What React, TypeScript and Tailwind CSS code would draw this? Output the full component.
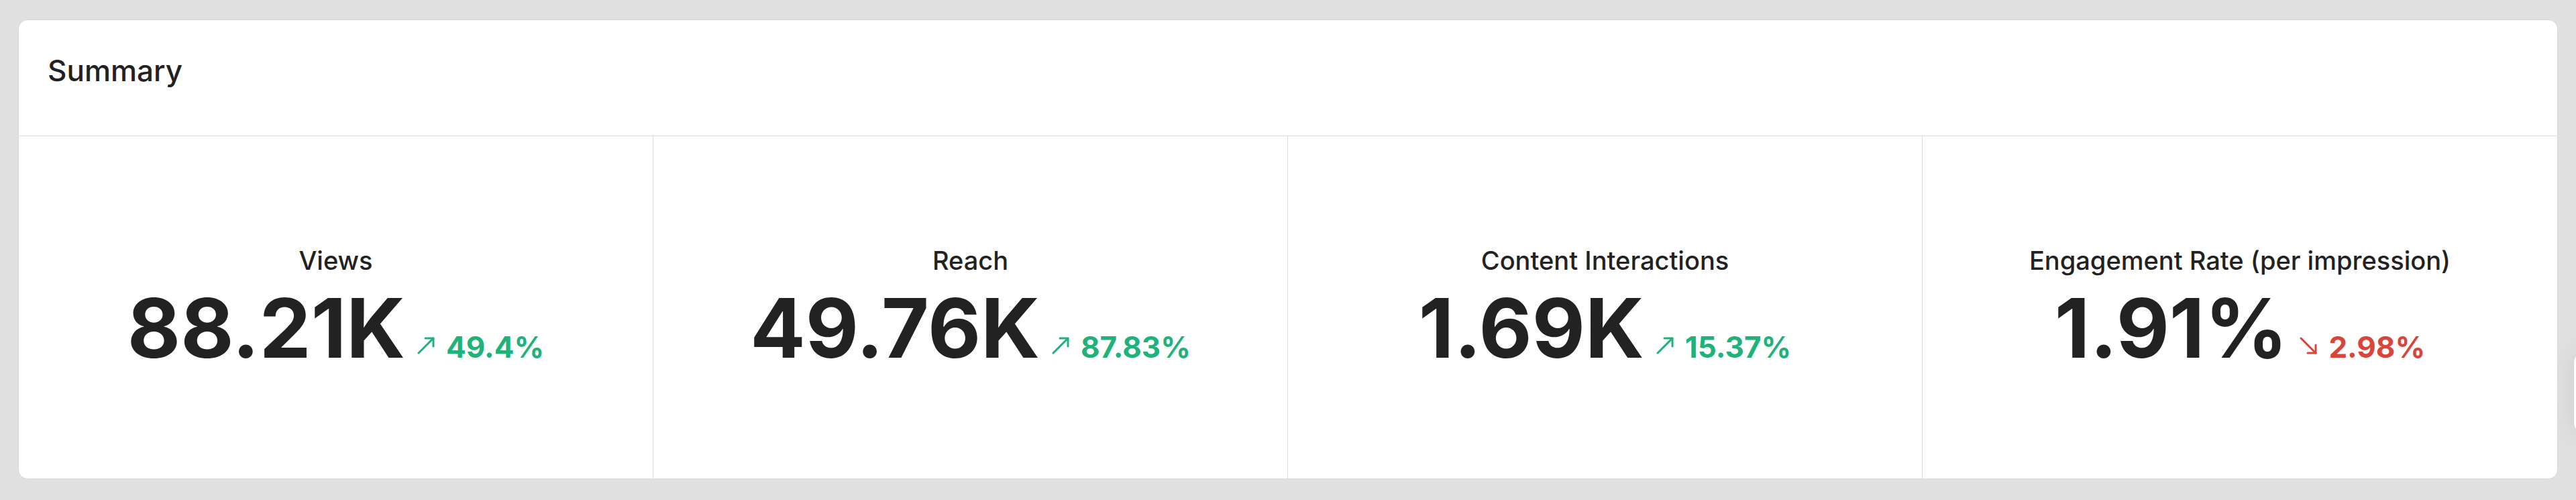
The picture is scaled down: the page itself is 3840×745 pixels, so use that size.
import React from "react";

type Metric = {
  label: string;
  value: string;
  delta: string;
  up: boolean;
};

const metrics: Metric[] = [
  { label: "Views", value: "88.21K", delta: "49.4%", up: true },
  { label: "Reach", value: "49.76K", delta: "87.83%", up: true },
  { label: "Content Interactions", value: "1.69K", delta: "15.37%", up: true },
  { label: "Engagement Rate (per impression)", value: "1.91%", delta: "2.98%", up: false },
];

function TrendArrow({ up }: { up: boolean }) {
  return (
    <svg
      width="26"
      height="26"
      viewBox="0 0 26 26"
      fill="none"
      stroke="currentColor"
      strokeWidth="3"
      strokeLinecap="round"
      strokeLinejoin="round"
      className="mr-[17px] inline-block align-[5px]"
    >
      {up ? (
        <>
          <line x1="2" y1="24" x2="24" y2="2" />
          <polyline points="12,2 24,2 24,14" />
        </>
      ) : (
        <>
          <line x1="2" y1="2" x2="24" y2="24" />
          <polyline points="24,12 24,24 12,24" />
        </>
      )}
    </svg>
  );
}

function MetricCell({ m }: { m: Metric }) {
  return (
    <div className="flex flex-col items-center justify-center">
      <div className="text-[38px] font-medium leading-[1.2] text-[#222]">{m.label}</div>
      <div className="mt-[17px] flex items-baseline justify-center">
        <span className="text-[122px] font-bold leading-none text-[#222]">{m.value}</span>
        <span
          className={
            m.up
              ? "ml-[18px] text-[44px] font-bold leading-none text-[#1fb27a]"
              : "ml-[18px] text-[44px] font-bold leading-none text-[#d9453b]"
          }
        >
          <TrendArrow up={m.up} />
          {m.delta}
        </span>
      </div>
    </div>
  );
}

export default function App() {
  return (
    <div className="relative h-[745px] overflow-hidden bg-[#e0e0e0] px-[27px] pt-[29px] font-['Inter',sans-serif]">
      <div className="flex h-[685px] flex-col rounded-[14px] border border-[#d8d8d8] bg-white">
        <div className="h-[173px] border-b border-[#dcdcdc] pl-[43px] pt-[49px]">
          <div className="text-[44px] font-medium leading-[1.2] text-[#222]">Summary</div>
        </div>
        <div className="grid flex-1 grid-cols-4 divide-x divide-[#dcdcdc]">
          {metrics.map((m) => (
            <MetricCell key={m.label} m={m} />
          ))}
        </div>
      </div>

      {/* floating handle peeking in from the right edge */}
      <div className="absolute left-[3836px] top-[525px] h-[120px] w-[60px] rounded-l-[14px] border border-[#d4d4d4] bg-white shadow-[0_0_40px_rgba(0,0,0,0.08)]" />
    </div>
  );
}
